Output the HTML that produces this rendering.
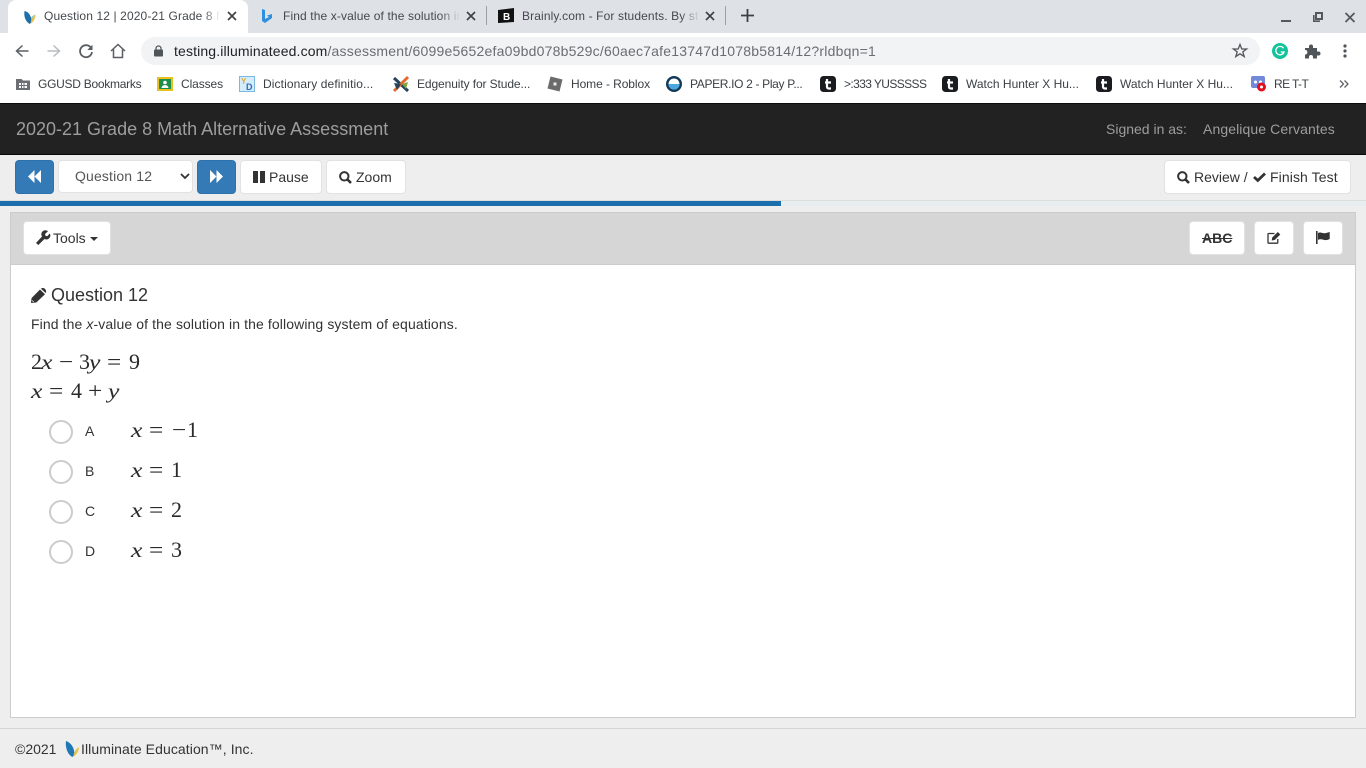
<!DOCTYPE html>
<html><head><meta charset="utf-8"><title>Question 12</title>
<style>
*{box-sizing:border-box}
html,body{margin:0;padding:0;width:1366px;height:768px;overflow:hidden;background:#fff;font-family:"Liberation Sans",sans-serif}
.a{position:absolute;white-space:nowrap}
.c{color:#45494d;font-size:12px;line-height:16px}
.fade{overflow:hidden}
.bm{position:absolute;top:76px;font-size:12px;line-height:16px;color:#3c4043;white-space:nowrap}
.btn{position:absolute;background:#fff;border:1px solid #e2e2e2;border-radius:4px;color:#333;font-size:14px;line-height:20px;white-space:nowrap}
.blue{position:absolute;background:#337ab7;border:1px solid #2e72ac;border-radius:4px}
.m{font-family:"Liberation Serif",serif;font-size:22px;color:#2a2a2a;line-height:26px;position:absolute;white-space:pre;height:26px}
.m b{position:absolute;top:0;font-weight:400}
.m b.i{font-style:italic;font-size:21px;transform:scaleX(1.22);transform-origin:left}
.m b.o{transform:scaleX(1.15);transform-origin:left;font-weight:400}
.r{position:absolute;left:49px;width:24px;height:24px;border:2px solid #ccc;border-radius:50%;background:#fff}
.l{position:absolute;left:85px;font-size:14px;color:#333;line-height:20px}
svg{position:absolute;overflow:visible}
</style></head><body>
<!-- chrome tab strip -->
<div class="a" style="left:0;top:0;width:1366px;height:33px;background:#dee1e6"></div>
<div class="a" style="left:8px;top:0;width:240px;height:33px;background:#fff;border-radius:8px 8px 0 0"></div>
<div class="a" style="left:486px;top:6px;width:1px;height:19px;background:#9aa0a6"></div>
<div class="a" style="left:725px;top:6px;width:1px;height:19px;background:#9aa0a6"></div>
<svg style="left:24px;top:11px" width="12" height="13" viewBox="0 0 12 13"><path d="M.5 0C5 1 7.500 5 7.500 11L5.800 13C2 11 -.5 6 .5 0Z" fill="#1f6fa8"/><path d="M11.500 3.500C11.500 7.500 9.500 11 6.800 12.500C6.800 8.500 8.500 5.500 11.500 3.500Z" fill="#e3c24f"/><path d="M11.500 3.500C9.500 4.500 8 6.500 7.300 9L7 7C8 5.500 9.500 4 11.500 3.500Z" fill="#5fb4e0"/></svg>
<div class="a c fade" style="left:44px;top:8px;width:175px;letter-spacing:.12px">Question 12 | 2020-21 Grade 8 Math</div>
<div class="a" style="left:204px;top:6px;width:16px;height:20px;background:linear-gradient(90deg,rgba(255,255,255,0),#fff)"></div>
<svg style="left:227px;top:11px" width="10" height="10" viewBox="0 0 10 10"><path d="M1 1L9 9M9 1L1 9" stroke="#3c4043" stroke-width="1.600"/></svg>
<svg style="left:261px;top:9px" width="12" height="15" viewBox="0 0 12 15"><path d="M1 0L4 1V10L8 8L6 6.500L11 5V9L4 14L1 12Z" fill="#2f8fe0"/></svg>
<div class="a c fade" style="left:283px;top:8px;width:176px;letter-spacing:.12px">Find the x-value of the solution in the</div>
<div class="a" style="left:440px;top:6px;width:20px;height:20px;background:linear-gradient(90deg,rgba(222,225,230,0),#dee1e6)"></div>
<svg style="left:466px;top:11px" width="10" height="10" viewBox="0 0 10 10"><path d="M1 1L9 9M9 1L1 9" stroke="#3c4043" stroke-width="1.600"/></svg>
<svg style="left:498px;top:8px" width="16" height="16" viewBox="0 0 16 16"><path d="M0 2L16 0V14L0 15Z" fill="#111"/><text x="5" y="12" font-size="10" font-weight="700" fill="#fff" font-family="Liberation Sans">B</text></svg>
<div class="a c fade" style="left:522px;top:8px;width:176px;letter-spacing:.12px">Brainly.com - For students. By students</div>
<div class="a" style="left:680px;top:6px;width:20px;height:20px;background:linear-gradient(90deg,rgba(222,225,230,0),#dee1e6)"></div>
<svg style="left:705px;top:11px" width="10" height="10" viewBox="0 0 10 10"><path d="M1 1L9 9M9 1L1 9" stroke="#3c4043" stroke-width="1.600"/></svg>
<svg style="left:741px;top:9px" width="13" height="13" viewBox="0 0 13 13"><path d="M6.500 0V13M0 6.500H13" stroke="#3c4043" stroke-width="1.800"/></svg>
<!-- window controls -->
<svg style="left:1281px;top:20px" width="10" height="2"><rect width="10" height="2" fill="#55595e"/></svg>
<svg style="left:1313px;top:12px" width="10" height="10" viewBox="0 0 10 10"><path d="M3 1H9V7H3Z" fill="none" stroke="#55595e" stroke-width="2"/><path d="M.8 3V9.200H7" fill="none" stroke="#55595e" stroke-width="1.600"/></svg>
<svg style="left:1345px;top:13px" width="10" height="9" viewBox="0 0 10 9"><path d="M.5 0L9.500 9M9.500 0L.5 9" stroke="#55595e" stroke-width="1.800"/></svg>
<!-- toolbar -->
<div class="a" style="left:0;top:33px;width:1366px;height:37px;background:#fff"></div>
<svg style="left:15px;top:44px" width="14" height="14" viewBox="0 0 14 14"><path d="M13.500 7H2M7.500 1.500L1.500 7L7.500 12.500" fill="none" stroke="#5a5e63" stroke-width="1.500"/></svg>
<svg style="left:47px;top:44px" width="14" height="14" viewBox="0 0 14 14"><path d="M.5 7H12M6.500 1.500L12.500 7L6.500 12.500" fill="none" stroke="#b8bbbf" stroke-width="1.500"/></svg>
<svg style="left:79px;top:44px" width="14" height="14" viewBox="0 0 14 14"><path d="M12 3.800A6 6 0 1 0 13 8" fill="none" stroke="#5a5e63" stroke-width="1.800"/><path d="M13.500 .8V6H8.300Z" fill="#5a5e63"/></svg>
<svg style="left:110px;top:43px" width="16" height="16" viewBox="0 0 16 16"><path d="M1 8L8 1.500L15 8M3.500 6.500V14.500H12.500V6.500" fill="none" stroke="#5a5e63" stroke-width="1.500"/></svg>
<div class="a" style="left:141px;top:37px;width:1119px;height:28px;border-radius:14px;background:#f1f3f4"></div>
<svg style="left:154px;top:45px" width="9" height="12" viewBox="0 0 9 12"><path d="M2 5V3.500a2.500 2.500 0 0 1 5 0V5" fill="none" stroke="#50555a" stroke-width="1.200"/><rect y="4.500" width="9" height="7" rx="1" fill="#50555a"/></svg>
<div class="a" style="left:174px;top:42px;font-size:14px;line-height:18px;color:#6a6d71;letter-spacing:.215px"><span style="color:#202124;letter-spacing:.135px">testing.illuminateed.com</span>/assessment/6099e5652efa09bd078b529c/60aec7afe13747d1078b5814/12?rldbqn=1</div>
<svg style="left:1232px;top:43px" width="16" height="15" viewBox="0 0 16 15"><path d="M8 1.500L9.800 6H14.600L10.800 8.900L12.200 13.600L8 10.800L3.800 13.600L5.200 8.900L1.400 6H6.200Z" fill="none" stroke="#50555a" stroke-width="1.300"/></svg>
<svg style="left:1272px;top:43px" width="16" height="16" viewBox="0 0 16 16"><circle cx="8" cy="8" r="8" fill="#15c39a"/><path d="M11.500 5.200A4.200 4.200 0 1 0 12 9H8.800" fill="none" stroke="#fff" stroke-width="1.300"/></svg>
<svg style="left:1304px;top:43px" width="16" height="16" viewBox="0 0 16 16"><path d="M1 5H5V3.500A2 2 0 0 1 9 3.500V5H13V8.500H14.500A2 2 0 0 1 14.500 12.500H13V15.500H9V14A2 2 0 0 0 5 14V15.500H1V11.500H2A2.500 2.500 0 0 0 2 7H1Z" fill="#50555a"/></svg>
<svg style="left:1343px;top:44px" width="4" height="14" viewBox="0 0 4 14"><circle cx="2" cy="2" r="1.600" fill="#50555a"/><circle cx="2" cy="7" r="1.600" fill="#50555a"/><circle cx="2" cy="12" r="1.600" fill="#50555a"/></svg>
<!-- bookmarks -->
<svg style="left:16px;top:78px" width="14" height="12" viewBox="0 0 14 12"><path d="M0 1H5.500L7 2.500H14V12H0Z" fill="#6b6f74"/><rect x="3" y="5" width="8" height="5" fill="#fff"/><path d="M5.500 5V10M8 5V10M3 7.500H11" stroke="#6b6f74"/></svg>
<div class="bm" style="left:38px;letter-spacing:-.27px">GGUSD Bookmarks</div>
<svg style="left:157px;top:77px" width="16" height="14" viewBox="0 0 16 14"><rect width="16" height="14" fill="#e8c020"/><rect x="2" y="2" width="12" height="10" fill="#1f8e4a"/><circle cx="8" cy="5.500" r="1.800" fill="#fff"/><path d="M4.500 11a3.500 3 0 0 1 7 0Z" fill="#fff"/></svg>
<div class="bm" style="left:181px;letter-spacing:-.1px">Classes</div>
<svg style="left:239px;top:76px" width="16" height="16" viewBox="0 0 16 16"><rect x=".5" y=".5" width="15" height="15" fill="#d5ecfa" stroke="#7ab8e0"/><text x="2" y="8" font-size="8" font-weight="700" fill="#e3a92b" font-family="Liberation Sans">Y</text><text x="7" y="14" font-size="9" font-weight="700" fill="#2a6ebb" font-family="Liberation Sans">D</text></svg>
<div class="bm" style="left:263px;letter-spacing:.1px">Dictionary definitio...</div>
<svg style="left:393px;top:76px" width="16" height="16" viewBox="0 0 16 16"><path d="M1 2L15 15" stroke="#26435c" stroke-width="3"/><path d="M15 1L1 15" stroke="#e8662a" stroke-width="3"/><path d="M1 7L8 8L4 14Z" fill="#26435c"/><path d="M15 6L9 8L13 13Z" fill="#7aa53c"/></svg>
<div class="bm" style="left:417px;letter-spacing:-.1px">Edgenuity for Stude...</div>
<svg style="left:547px;top:76px" width="16" height="16" viewBox="0 0 16 16"><path d="M3.500 .5L15.500 3.500L12.500 15.500L.5 12.500Z" fill="#6b6b6b"/><rect x="6.500" y="6.500" width="3" height="3" fill="#eee"/></svg>
<div class="bm" style="left:571px;letter-spacing:-.08px">Home - Roblox</div>
<svg style="left:666px;top:76px" width="16" height="16" viewBox="0 0 16 16"><circle cx="8" cy="8" r="8" fill="#123a5a"/><circle cx="8" cy="8" r="5.500" fill="#fff"/><path d="M2.500 8H13.500A5.500 5.500 0 0 1 2.500 8Z" fill="#4aa8e0"/></svg>
<div class="bm" style="left:690px;letter-spacing:-.33px">PAPER.IO 2 - Play P...</div>
<svg style="left:820px;top:76px" width="16" height="16" viewBox="0 0 16 16"><rect width="16" height="16" rx="3.500" fill="#1a1c20"/><path d="M7 3V11A2 2 0 0 0 9 12.500H11M5 6.500H11" fill="none" stroke="#fff" stroke-width="2.200"/></svg>
<div class="bm" style="left:844px;letter-spacing:-.6px">&gt;:333 YUSSSSS</div>
<svg style="left:942px;top:76px" width="16" height="16" viewBox="0 0 16 16"><rect width="16" height="16" rx="3.500" fill="#1a1c20"/><path d="M7 3V11A2 2 0 0 0 9 12.500H11M5 6.500H11" fill="none" stroke="#fff" stroke-width="2.200"/></svg>
<div class="bm" style="left:966px">Watch Hunter X Hu...</div>
<svg style="left:1096px;top:76px" width="16" height="16" viewBox="0 0 16 16"><rect width="16" height="16" rx="3.500" fill="#1a1c20"/><path d="M7 3V11A2 2 0 0 0 9 12.500H11M5 6.500H11" fill="none" stroke="#fff" stroke-width="2.200"/></svg>
<div class="bm" style="left:1120px">Watch Hunter X Hu...</div>
<svg style="left:1251px;top:76px" width="16" height="16" viewBox="0 0 16 16"><rect width="14" height="12" rx="2" fill="#7289da"/><circle cx="4.500" cy="6" r="1.500" fill="#fff"/><circle cx="9.500" cy="6" r="1.500" fill="#fff"/><circle cx="10.500" cy="11" r="4.500" fill="#e0101e"/><circle cx="10.500" cy="11" r="1.500" fill="#fff"/></svg>
<div class="bm" style="left:1274px;letter-spacing:-.6px">RE T-T</div>
<svg style="left:1339px;top:80px" width="10" height="8" viewBox="0 0 10 8"><path d="M1 .5L4.500 4L1 7.500M5.500 .5L9 4L5.500 7.500" fill="none" stroke="#5f6368" stroke-width="1.300"/></svg>
<div class="a" style="left:0;top:96px;width:1366px;height:7px;background:#fff"></div>
<!-- app header -->
<div class="a" style="left:0;top:103px;width:1366px;height:52px;background:#222;border-top:1px solid #0c0c0c;border-bottom:1px solid #080808"></div>
<div class="a" style="left:16px;top:118px;font-size:18px;line-height:22px;color:#9d9d9d">2020-21 Grade 8 Math Alternative Assessment</div>
<div class="a" style="left:1106px;top:119px;font-size:14px;line-height:20px;color:#9d9d9d">Signed in as:</div>
<div class="a" style="left:1203px;top:119px;font-size:14px;line-height:20px;color:#9d9d9d;letter-spacing:.1px">Angelique Cervantes</div>
<!-- nav row -->
<div class="a" style="left:0;top:155px;width:1366px;height:613px;background:#eee"></div>
<div class="a" style="left:0;top:200px;width:1366px;height:1px;background:#ddd"></div>
<div class="a" style="left:0;top:201px;width:1366px;height:5px;background:#e8edf0"></div>
<div class="a" style="left:0;top:201px;width:781px;height:5px;background:#1b6fad"></div>
<div class="blue" style="left:15px;top:160px;width:39px;height:34px"></div>
<svg style="left:28px;top:170px" width="14" height="13" viewBox="0 0 14 13"><path d="M6.500 0V13L0 6.500ZM13 0V13L6.500 6.500Z" fill="#fff"/></svg>
<div class="a" style="left:58px;top:160px;width:135px;height:33px;background:#fff;border:1px solid #e2e2e2;border-radius:4px"></div>
<div class="a" style="left:75px;top:166px;font-size:14px;line-height:20px;color:#555;letter-spacing:.15px">Question 12</div>
<svg style="left:180px;top:173px" width="10" height="7" viewBox="0 0 10 7"><path d="M1 1L5 5L9 1" fill="none" stroke="#333" stroke-width="1.800"/></svg>
<div class="blue" style="left:197px;top:160px;width:39px;height:34px"></div>
<svg style="left:210px;top:170px" width="14" height="13" viewBox="0 0 14 13"><path d="M0 0L6.500 6.500L0 13ZM6.500 0L13 6.500L6.500 13Z" fill="#fff"/></svg>
<div class="btn" style="left:240px;top:160px;width:82px;height:34px"><span style="position:absolute;left:28px;top:6px">Pause</span></div>
<svg style="left:253px;top:171px" width="12" height="12"><rect width="5" height="12" fill="#333"/><rect x="7" width="5" height="12" fill="#333"/></svg>
<div class="btn" style="left:326px;top:160px;width:80px;height:34px"><span style="position:absolute;left:29px;top:6px">Zoom</span></div>
<svg style="left:339px;top:171px" width="13" height="13" viewBox="0 0 13 13"><circle cx="5.300" cy="5.300" r="4.200" fill="none" stroke="#333" stroke-width="2"/><path d="M8.300 8.300L12 12" stroke="#333" stroke-width="2.600"/></svg>
<div class="btn" style="left:1164px;top:160px;width:187px;height:34px"><span style="position:absolute;left:29px;top:6px">Review /</span><span style="position:absolute;left:105px;top:6px;letter-spacing:.1px">Finish Test</span></div>
<svg style="left:1177px;top:171px" width="13" height="13" viewBox="0 0 13 13"><circle cx="5.300" cy="5.300" r="4.200" fill="none" stroke="#333" stroke-width="2"/><path d="M8.300 8.300L12 12" stroke="#333" stroke-width="2.600"/></svg>
<svg style="left:1253px;top:172px" width="13" height="10" viewBox="0 0 13 10"><path d="M1 5L4.800 8.500L12 1.500" fill="none" stroke="#333" stroke-width="2.800"/></svg>
<!-- panel -->
<div class="a" style="left:10px;top:212px;width:1346px;height:506px;background:#fff;border:1px solid #ccc"></div>
<div class="a" style="left:11px;top:213px;width:1344px;height:52px;background:#d6d6d6;border-bottom:1px solid #ccc"></div>
<div class="btn" style="left:23px;top:221px;width:88px;height:34px"><span style="position:absolute;left:29px;top:6px">Tools</span></div>
<svg style="left:36px;top:231px" width="14" height="14" viewBox="0 0 14 14"><path d="M0 12L6 5.500A4 4 0 0 1 12 .3L9 3L9.500 4.800L11.200 5.300L13.800 2.500A4 4 0 0 1 8.500 8L2.300 14Z" fill="#333"/></svg>
<svg style="left:90px;top:237px" width="8" height="4"><path d="M0 0H8L4 4Z" fill="#333"/></svg>
<div class="btn" style="left:1189px;top:221px;width:56px;height:34px"></div>
<div class="a" style="left:1202px;top:229px;font-size:14px;line-height:18px;font-weight:700;color:#333;text-decoration:line-through">ABC</div>
<div class="btn" style="left:1254px;top:221px;width:40px;height:34px"></div>
<svg style="left:1267px;top:231px" width="14" height="13" viewBox="0 0 14 13"><path d="M10.800 8V11.500Q10.800 12.200 10 12.200H1.800Q1 12.200 1 11.400V3.300Q1 2.500 1.800 2.500H7.500" fill="none" stroke="#333" stroke-width="1.300"/><path d="M4.700 9.500L5.200 6.500L10.800 1L13.300 3.500L7.700 9Z" fill="#333"/></svg>
<div class="btn" style="left:1303px;top:221px;width:40px;height:34px"></div>
<svg style="left:1316px;top:231px" width="14" height="13" viewBox="0 0 14 13"><rect width="1.600" height="13" fill="#333"/><path d="M2 2C4.500 .7 6.500 2.500 9 2.200C10.500 2 12.500 1.200 13.700 1V8C11.500 9 9.500 9.500 7.500 8.800C5.500 8.200 3.500 8 2 9Z" fill="#333"/></svg>
<!-- question -->
<svg style="left:31px;top:288px" width="15" height="15" viewBox="0 0 15 15"><path d="M0 15L.6 10L9 1.500L14 6.200L5.300 14.500Z" fill="#333"/><path d="M10 .7C11 -.2 12.700 -.2 13.800 .8L14.500 1.600C15.400 2.700 15.300 4 14.600 5Z" fill="#333"/><path d="M1.200 12.500L2.700 14" stroke="#fff" stroke-width=".8"/></svg>
<div class="a" style="left:51px;top:284px;font-size:18px;line-height:22px;color:#333">Question 12</div>
<div class="a" style="left:31px;top:314px;font-size:14px;line-height:20px;color:#333;letter-spacing:.105px">Find the <i>x</i>-value of the solution in the following system of equations.</div>
<div class="m" style="left:0;top:349px"><b style="left:31px">2</b><b class="i" style="left:41px">x</b><b class="o" style="left:59px">−</b><b style="left:79px">3</b><b class="i" style="left:89px">y</b><b class="o" style="left:107px">=</b><b style="left:129px">9</b></div>
<div class="m" style="left:0;top:378px"><b class="i" style="left:31px">x</b><b class="o" style="left:49px">=</b><b style="left:71px">4</b><b class="o" style="left:88px">+</b><b class="i" style="left:108px">y</b></div>
<div class="r" style="top:420px"></div><div class="l" style="top:421px">A</div>
<div class="m" style="left:0;top:417px"><b class="i" style="left:131px">x</b><b class="o" style="left:149px">=</b><b class="o" style="left:172px">−</b><b style="left:187px">1</b></div>
<div class="r" style="top:460px"></div><div class="l" style="top:461px">B</div>
<div class="m" style="left:0;top:457px"><b class="i" style="left:131px">x</b><b class="o" style="left:149px">=</b><b style="left:171px">1</b></div>
<div class="r" style="top:500px"></div><div class="l" style="top:501px">C</div>
<div class="m" style="left:0;top:497px"><b class="i" style="left:131px">x</b><b class="o" style="left:149px">=</b><b style="left:171px">2</b></div>
<div class="r" style="top:540px"></div><div class="l" style="top:541px">D</div>
<div class="m" style="left:0;top:537px"><b class="i" style="left:131px">x</b><b class="o" style="left:149px">=</b><b style="left:171px">3</b></div>
<!-- footer -->
<div class="a" style="left:0;top:728px;width:1366px;height:1px;background:#d5d5d5"></div>
<div class="a" style="left:15px;top:739px;font-size:14px;line-height:20px;color:#333">©2021</div>
<svg style="left:65px;top:741px" width="15" height="16" viewBox="0 0 15 16"><path d="M1 0C6 1.500 9.500 7 9.500 13.500L7.500 16C3 14 0 7 1 0Z" fill="#1f78b4"/><path d="M14 6C14 10 11.500 14 8.500 15.500C8.500 12 10.500 8 14 6Z" fill="#e5c44a"/></svg>
<div class="a" style="left:81px;top:739px;font-size:14px;line-height:20px;color:#333;letter-spacing:.08px">Illuminate Education™, Inc.</div>
</body></html>
